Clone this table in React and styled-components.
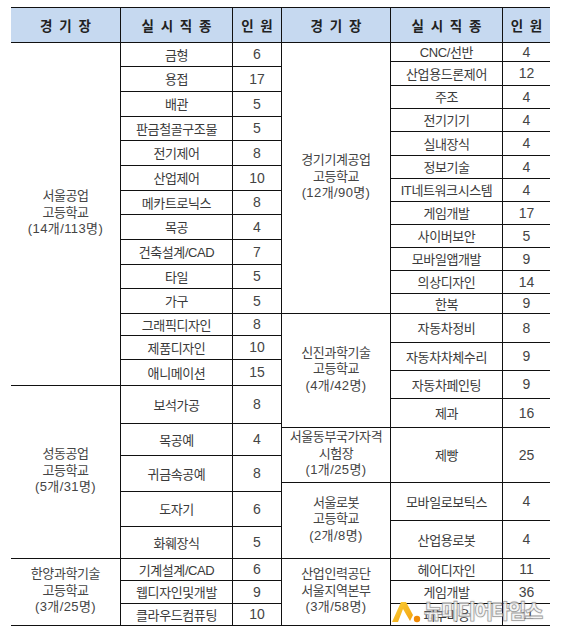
import React from 'react';
import styled, { createGlobalStyle } from 'styled-components';

const GlobalStyle = createGlobalStyle`
  html, body {
    margin: 0;
    padding: 0;
    background: #fff;
  }
  body {
    font-family: "Liberation Sans", "Noto Sans CJK KR", sans-serif;
    color: #3a3a3a;
  }
`;

const Page = styled.div`
  position: relative;
  width: 563px;
  height: 640px;
  box-sizing: border-box;
  padding: 7px 0 0 11px;
  display: flex;
  overflow: hidden;
`;

const Half = styled.div`
  display: grid;
  grid-template-columns: ${props => props.$cols};
  grid-template-rows: ${props => props.$rows};
  border-top: 1px solid #111;
  align-self: flex-start;
`;

const Head = styled.div`
  box-sizing: border-box;
  display: flex;
  align-items: center;
  justify-content: center;
  background: #c6d9f0;
  border-bottom: 1px solid #111;
  border-right: ${props => props.$last ? 'none' : '1px solid #111'};
  font-size: 13.5px;
  font-weight: bold;
  color: #222;
  word-spacing: 3px;
  white-space: pre;
`;

const Cell = styled.div`
  box-sizing: border-box;
  display: flex;
  align-items: center;
  justify-content: center;
  text-align: center;
  border-bottom: 1px solid #111;
  border-right: ${props => props.$last ? 'none' : '1px solid #111'};
  font-size: 13px;
  letter-spacing: -0.4px;
  white-space: nowrap;
  padding-bottom: 1px;
`;

const School = styled(Cell)`
  grid-row: span ${props => props.$span};
  flex-direction: column;
  line-height: 16.5px;
  padding-bottom: 2px;
  color: #444;
`;

const Tally = styled.span`
  letter-spacing: 0.4px;
`;

const Count = styled(Cell)`
  letter-spacing: 0;
  font-size: 14px;
  color: #444;
`;

const Watermark = styled.div`
  position: absolute;
  left: 391px;
  top: 599px;
  display: flex;
  align-items: flex-end;
  gap: 1px;
  pointer-events: none;
`;

const MarkText = styled.span`
  font-family: "Noto Sans CJK KR", sans-serif;
  font-size: 20px;
  font-weight: 900;
  letter-spacing: -1.6px;
  line-height: 24px;
  color: rgba(255, 255, 255, 0.82);
  -webkit-text-stroke: 0.8px rgba(130, 130, 130, 0.75);
  text-shadow: 0 0 2px rgba(0, 0, 0, 0.25);
`;

const left = [
  {
    name: ['서울공업', '고등학교', '(14개/113명)'],
    rows: [
      ['금형', 6, 24], ['용접', 17, 25], ['배관', 5, 25], ['판금철골구조물', 5, 24],
      ['전기제어', 8, 25], ['산업제어', 10, 25], ['메카트로닉스', 8, 24], ['목공', 4, 25],
      ['건축설계/CAD', 7, 25], ['타일', 5, 24], ['가구', 5, 25], ['그래픽디자인', 8, 22],
      ['제품디자인', 10, 24], ['애니메이션', 15, 26],
    ],
  },
  {
    name: ['성동공업', '고등학교', '(5개/31명)'],
    rows: [
      ['보석가공', 8, 38], ['목공예', 4, 32], ['귀금속공예', 8, 36],
      ['도자기', 6, 35], ['화훼장식', 5, 32],
    ],
  },
  {
    name: ['한양과학기술', '고등학교', '(3개/25명)'],
    rows: [['기계설계/CAD', 6, 22], ['웹디자인및개발', 9, 23], ['클라우드컴퓨팅', 10, 22]],
  },
];

const right = [
  {
    name: ['경기기계공업', '고등학교', '(12개/90명)'],
    rows: [
      ['CNC/선반', 4, 19], ['산업용드론제어', 12, 24], ['주조', 4, 23], ['전기기기', 4, 23],
      ['실내장식', 4, 24], ['정보기술', 4, 23], ['IT네트워크시스템', 4, 23], ['게임개발', 17, 23],
      ['사이버보안', 5, 23], ['모바일앱개발', 9, 23], ['의상디자인', 14, 23], ['한복', 9, 20],
    ],
  },
  {
    name: ['신진과학기술', '고등학교', '(4개/42명)'],
    rows: [['자동차정비', 8, 29], ['자동차차체수리', 9, 28], ['자동차페인팅', 9, 28], ['제과', 16, 29]],
  },
  {
    name: ['서울동부국가자격', '시험장', '(1개/25명)'],
    rows: [['제빵', 25, 55]],
  },
  {
    name: ['서울로봇', '고등학교', '(2개/8명)'],
    rows: [['모바일로보틱스', 4, 38], ['산업용로봇', 4, 38]],
  },
  {
    name: ['산업인력공단', '서울지역본부', '(3개/58명)'],
    rows: [['헤어디자인', 11, 22], ['게임개발', 36, 23], ['피부미용', 11, 22]],
  },
];

function rowTemplate(groups) {
  const heights = groups.flatMap(g => g.rows.map(r => `${r[2]}px`));
  return ['35px', ...heights].join(' ');
}

function Table({ groups, cols, closed }) {
  return (
    <Half $cols={cols} $rows={rowTemplate(groups)}>
      <Head>경 기 장</Head>
      <Head>실 시 직 종</Head>
      <Head $last={!closed}>인 원</Head>
      {groups.map(g => (
        <React.Fragment key={g.name.join('')}>
          <School $span={g.rows.length}>
            <span>{g.name[0]}</span>
            <span>{g.name[1]}</span>
            <Tally>{g.name[2]}</Tally>
          </School>
          {g.rows.map(([job, n]) => (
            <React.Fragment key={job + n}>
              <Cell>{job}</Cell>
              <Count $last={!closed}>{n}</Count>
            </React.Fragment>
          ))}
        </React.Fragment>
      ))}
    </Half>
  );
}

function Logo() {
  return (
    <svg width="32" height="24" viewBox="0 0 32 24">
      <defs>
        <linearGradient id="lg" x1="0" y1="0" x2="1" y2="1">
          <stop offset="0" stopColor="#fbd23a" />
          <stop offset="1" stopColor="#f3a10f" />
        </linearGradient>
      </defs>
      <polygon points="1,23 10,3 15,3 22,16 19,22 12,10 7,23" fill="url(#lg)" />
      <circle cx="26" cy="20" r="3.2" fill="#f08a06" />
    </svg>
  );
}

export default function App() {
  return (
    <>
      <GlobalStyle />
      <Page>
        <Table groups={left} cols="110px 112px 49px" closed />
        <Table groups={right} cols="109px 112px 47px" />
        <Watermark>
          <Logo />
          <MarkText>뉴미디어타임스</MarkText>
        </Watermark>
      </Page>
    </>
  );
}
